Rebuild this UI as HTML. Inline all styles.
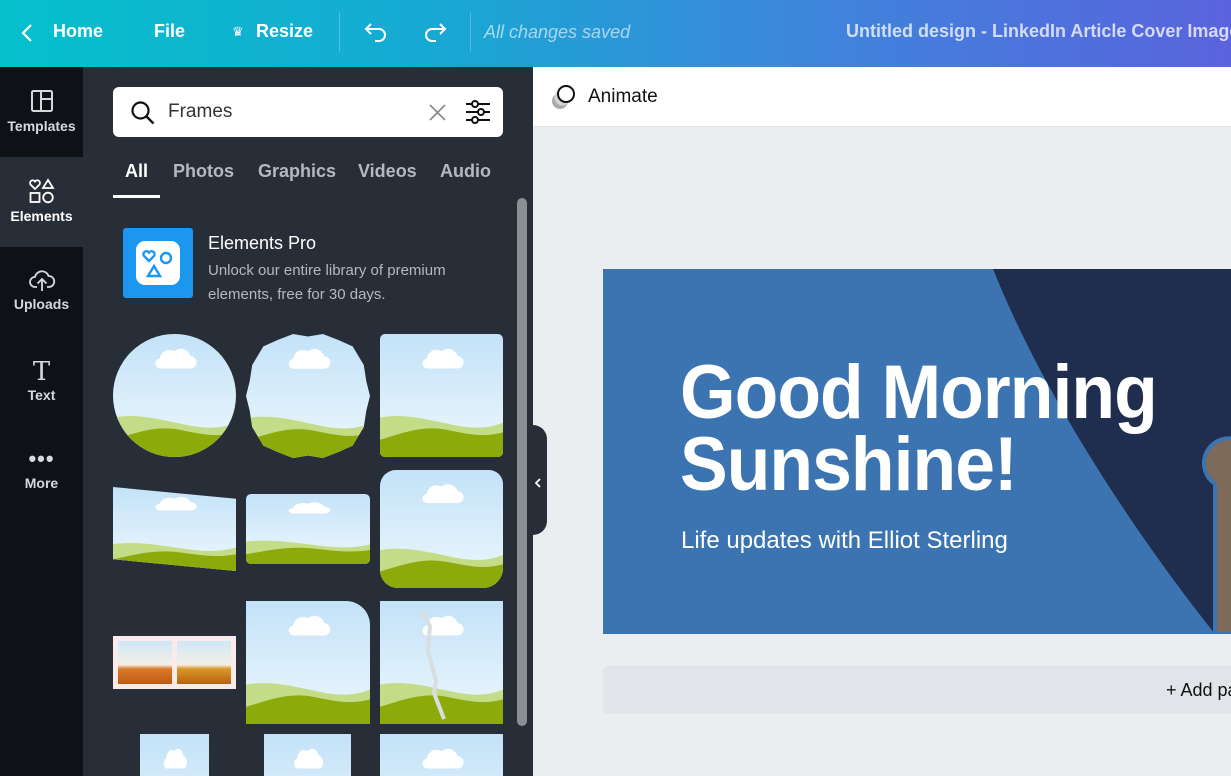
<!DOCTYPE html>
<html><head><meta charset="utf-8"><style>
*{margin:0;padding:0;box-sizing:border-box}
body{width:1231px;height:776px;overflow:hidden;position:relative;font-family:"Liberation Sans","DejaVu Sans",sans-serif;background:#ebeef1}
.top{position:absolute;left:0;top:0;width:1231px;height:67px;background:linear-gradient(90deg,#05c0cb 0%,#17a9d3 35%,#3d86dc 65%,#5a63dd 100%);color:#fff;overflow:hidden}
.top .t{position:absolute;top:21px;font-size:18px;font-weight:bold;white-space:nowrap}
.sep{position:absolute;top:12px;width:1px;height:40px;background:rgba(255,255,255,.25)}
.rail{position:absolute;left:0;top:67px;width:83px;height:709px;background:#0e1217}
.ri{position:absolute;left:0;width:83px;text-align:center;color:#d6d8dc;font-size:14px;font-weight:bold}
.panel{position:absolute;left:83px;top:67px;width:450px;height:709px;background:#282e37;overflow:hidden}
.search{position:absolute;left:30px;top:20px;width:390px;height:50px;background:#fff;border-radius:6px}
.tabs span{position:absolute;top:94px;font-size:18px;font-weight:bold;color:#b5b9bf}
.thumb{position:absolute;overflow:hidden}
.thumb svg{width:100%;height:100%;display:block}
.canvasbar{position:absolute;left:533px;top:67px;width:698px;height:60px;background:#fff;border-bottom:1px solid #e0e3e7}
</style></head><body>
<svg width="0" height="0" style="position:absolute">
<defs>
<linearGradient id="sky" x1="0" y1="0" x2="0" y2="1"><stop offset="0" stop-color="#c3e2f8"/><stop offset="1" stop-color="#eef8fd"/></linearGradient>
<symbol id="l" viewBox="0 0 100 100" preserveAspectRatio="none">
<rect width="100" height="100" fill="url(#sky)"/>
<path d="M38 20a8 8 0 0 1 12-6a8 8 0 0 1 13 4a5 5 0 0 1 0 10h-24a4 4 0 0 1-1-8z" fill="#fff"/>
<path d="M0 68C20 64 40 70 60 74S90 76 100 72V100H0z" fill="#c3dc88"/>
<path d="M0 86C20 80 35 74 55 78S85 84 100 80V100H0z" fill="#8caa0a"/>
</symbol>
</defs></svg>

<div class="top">
<svg style="position:absolute;left:20px;top:22px" width="14" height="22" viewBox="0 0 14 22"><path d="M11 3L3 11l8 8" stroke="#fff" stroke-width="2.2" fill="none"/></svg>
<span class="t" style="left:53px">Home</span>
<span class="t" style="left:154px">File</span>
<span class="t" style="left:232px;font-size:13px;top:24px">♛</span>
<span class="t" style="left:256px">Resize</span>
<div class="sep" style="left:339px"></div>
<svg style="position:absolute;left:363px;top:20px" width="28" height="24" viewBox="0 0 28 24"><path d="M8 4L3 9l5 5M3 9h13a6 6 0 0 1 0 12h-4" stroke="#fff" stroke-width="2" fill="none"/></svg>
<svg style="position:absolute;left:420px;top:20px" width="28" height="24" viewBox="0 0 28 24"><path d="M20 4l5 5-5 5M25 9H12a6 6 0 0 0 0 12h4" stroke="#fff" stroke-width="2" fill="none"/></svg>
<div class="sep" style="left:470px"></div>
<span style="position:absolute;left:484px;top:22px;font-size:18px;font-style:italic;color:rgba(255,255,255,.6);white-space:nowrap">All changes saved</span>
<span class="t" style="left:846px;color:rgba(255,255,255,.75)">Untitled design - LinkedIn Article Cover Image</span>
</div>

<div class="rail">
<div style="position:absolute;left:0;top:90px;width:83px;height:90px;background:#282e37"></div>
<div style="position:absolute;left:0;top:0;width:83px;height:90px;background:#0e1217;border-bottom-right-radius:10px"></div>
<div style="position:absolute;left:0;top:180px;width:83px;height:529px;background:#0e1217;border-top-right-radius:10px"></div>
<div class="ri" style="top:22px"><svg width="24" height="24" viewBox="0 0 24 24"><rect x="2" y="2" width="20" height="20" rx="1.5" fill="none" stroke="#d6d8dc" stroke-width="2"/><path d="M11 2v20M11 10h11" stroke="#d6d8dc" stroke-width="2"/></svg><div style="margin-top:2px">Templates</div></div>
<div class="ri" style="top:110px;color:#fff"><svg width="28" height="28" viewBox="0 0 28 28" fill="none" stroke="#fff" stroke-width="1.8"><path d="M7 12L2.5 7.5a2.6 2.6 0 0 1 4.5-3 2.6 2.6 0 0 1 4.5 3z"/><path d="M20 3l5 8h-10z"/><rect x="2.5" y="16" width="9" height="9"/><circle cx="20" cy="20.5" r="4.8"/></svg><div>Elements</div></div>
<div class="ri" style="top:200px"><svg width="28" height="26" viewBox="0 0 28 26" fill="none" stroke="#d6d8dc" stroke-width="1.8"><path d="M9 20H7a5 5 0 0 1 0-10a7 7 0 0 1 13.5-1A5.5 5.5 0 0 1 21 20h-2"/><path d="M14 24V12M9.5 16.5L14 12l4.5 4.5"/></svg><div>Uploads</div></div>
<div class="ri" style="top:292px"><div style="font-family:'DejaVu Serif',serif;font-weight:normal;font-size:26px;line-height:26px">T</div><div style="margin-top:2px">Text</div></div>
<div class="ri" style="top:382px"><div style="font-size:22px;line-height:20px;letter-spacing:1px">•••</div><div style="margin-top:6px">More</div></div>
</div>

<div class="panel">
<div class="search">
<svg style="position:absolute;left:17px;top:13px" width="26" height="26" viewBox="0 0 26 26"><circle cx="10.5" cy="10.5" r="8" fill="none" stroke="#111" stroke-width="2.2"/><path d="M16.5 16.5l7 7" stroke="#111" stroke-width="2.4"/></svg>
<span style="position:absolute;left:55px;top:14px;font-size:19px;color:#333">Frames</span>
<svg style="position:absolute;left:316px;top:17px" width="17" height="17" viewBox="0 0 17 17"><path d="M1 1l15 15M16 1L1 16" stroke="#888" stroke-width="1.6"/></svg>
<svg style="position:absolute;left:352px;top:13px" width="26" height="24" viewBox="0 0 26 24" fill="none" stroke="#111" stroke-width="2"><path d="M1 4h24M1 12h24M1 20h24"/><circle cx="10" cy="4" r="3" fill="#fff"/><circle cx="16" cy="12" r="3" fill="#fff"/><circle cx="10" cy="20" r="3" fill="#fff"/></svg>
</div>
<div class="tabs">
<span style="left:42px;color:#fff">All</span>
<span style="left:90px">Photos</span>
<span style="left:175px">Graphics</span>
<span style="left:275px">Videos</span>
<span style="left:357px">Audio</span>
</div>
<div style="position:absolute;left:30px;top:128px;width:47px;height:3px;background:#fff"></div>
<div style="position:absolute;left:40px;top:161px;width:70px;height:70px;background:#1b97f0;border-radius:3px">
<div style="position:absolute;left:13px;top:13px;width:44px;height:44px;background:#fff;border-radius:9px">
<svg width="44" height="44" viewBox="0 0 44 44" fill="none" stroke="#1b97f0" stroke-width="2.4"><path d="M13 20l-5-5a3 3 0 0 1 5-3.5a3 3 0 0 1 5 3.5z"/><circle cx="30" cy="17" r="5"/><path d="M18 25l6 10h-12z"/></svg></div></div>
<div style="position:absolute;left:125px;top:166px;font-size:18px;color:#fff">Elements Pro</div>
<div style="position:absolute;left:125px;top:192px;font-size:15px;color:#b5b9bf;line-height:24px">Unlock our entire library of premium<br>elements, free for 30 days.</div>

<div class="thumb" style="left:30px;top:267px;width:123px;height:123px;border-radius:50%"><svg><use href="#l"/></svg></div>
<div class="thumb" style="left:163px;top:267px;width:124px;height:124px;clip-path:polygon(50% 2%,62% 0,75% 5%,86% 10%,95% 25%,97% 38%,100% 50%,97% 62%,95% 75%,86% 90%,75% 95%,62% 100%,50% 98%,38% 100%,25% 95%,14% 90%,5% 75%,3% 62%,0 50%,3% 38%,5% 25%,14% 10%,25% 5%,38% 0)"><svg><use href="#l"/></svg></div>
<div class="thumb" style="left:297px;top:267px;width:123px;height:123px;border-radius:5px"><svg><use href="#l"/></svg></div>
<div class="thumb" style="left:30px;top:420px;width:123px;height:84px;clip-path:polygon(0 0,100% 14%,100% 100%,0 86%)"><svg><use href="#l"/></svg></div>
<div class="thumb" style="left:163px;top:427px;width:124px;height:70px;border-radius:5px"><svg><use href="#l"/></svg></div>
<div class="thumb" style="left:297px;top:403px;width:123px;height:118px;border-radius:16px 14px 20px 18px"><svg><use href="#l"/></svg></div>
<div class="thumb" style="left:30px;top:569px;width:123px;height:53px;background:#fbeaea">
<div style="position:absolute;left:5px;top:5px;width:54px;height:43px;background:linear-gradient(#cfe7f9,#f5efe6 55%,#d97a2a 65%,#c05a12)"></div>
<div style="position:absolute;left:64px;top:5px;width:54px;height:43px;background:linear-gradient(#cfe7f9,#f5efe6 55%,#d9982a 65%,#b8620f)"></div></div>
<div class="thumb" style="left:163px;top:534px;width:124px;height:123px;border-top-right-radius:24px"><svg><use href="#l"/></svg></div>
<div class="thumb" style="left:297px;top:534px;width:123px;height:123px"><svg><use href="#l"/></svg>
<svg style="position:absolute;left:0;top:0" width="123" height="123"><path d="M42 10l8 15-2 25 8 30-2 12 10 26" stroke="#d8dde0" stroke-width="4" fill="none"/></svg></div>
<div class="thumb" style="left:57px;top:667px;width:69px;height:50px"><svg style="height:123px"><use href="#l"/></svg></div>
<div class="thumb" style="left:181px;top:667px;width:87px;height:50px"><svg style="height:123px"><use href="#l"/></svg></div>
<div class="thumb" style="left:297px;top:667px;width:123px;height:50px"><svg style="height:123px"><use href="#l"/></svg></div>

<div style="position:absolute;left:434px;top:131px;width:10px;height:528px;background:#8b8e93;border-radius:5px"></div>
</div>

<div style="position:absolute;left:528px;top:425px;width:19px;height:110px;background:#282e37;border-radius:0 14px 14px 0"></div>
<svg style="position:absolute;left:534px;top:477px" width="8" height="12" viewBox="0 0 8 12"><path d="M6 2L2 6l4 4" stroke="#fff" stroke-width="1.8" fill="none"/></svg>

<div class="canvasbar">
<svg style="position:absolute;left:17px;top:16px" width="30" height="28" viewBox="0 0 30 28"><circle cx="10" cy="18" r="8" fill="#aaa"/><circle cx="12.5" cy="14.5" r="8" fill="#d5d5d5"/><circle cx="16" cy="11" r="8" fill="#fff" stroke="#111" stroke-width="2"/></svg>
<span style="position:absolute;left:55px;top:19px;font-size:19px;color:#111">Animate</span>
</div>

<div style="position:absolute;left:603px;top:269px;width:628px;height:365px;background:#3b74b1;overflow:hidden">
<svg style="position:absolute;left:0;top:0" width="628" height="365"><path d="M390 0H628V365H612C560 300 450 150 390 0z" fill="#1f2d4f"/>
<path d="M612 365V215a25 25 0 0 1 20-45V365z" fill="#7d6a58" stroke="#3b74b1" stroke-width="4"/></svg>
<div style="position:absolute;left:77px;top:88px;font-size:76px;font-weight:bold;color:#fff;line-height:72px;letter-spacing:-1px;transform:scaleX(.94);transform-origin:left;white-space:nowrap">Good Morning<br>Sunshine!</div>
<div style="position:absolute;left:78px;top:258px;font-size:24px;color:#fff;white-space:nowrap">Life updates with Elliot Sterling</div>
</div>

<div style="position:absolute;left:603px;top:666px;width:628px;height:48px;background:#e1e4e8;border-radius:5px 0 0 5px"></div>
<span style="position:absolute;left:1166px;top:680px;font-size:18px;color:#111;white-space:nowrap">+ Add pa</span>
</body></html>
